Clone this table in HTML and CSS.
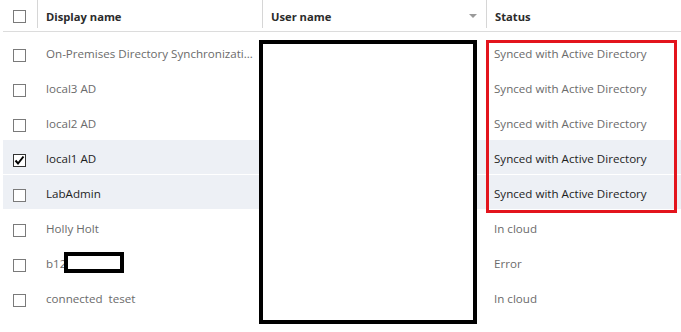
FILE: index.html
```html
<!DOCTYPE html>
<html lang="en">
<head>
    <meta charset="UTF-8">
    <meta name="viewport" content="width=device-width, initial-scale=1.0">
    <title>Users</title>
    <link rel="stylesheet" href="styles.css">
</head>
<body>
    <div class="user-list">
        <div class="list-head">
            <div class="cell cell-check"><span class="box"></span></div>
            <div class="cell head-col">Display name</div>
            <div class="cell head-col sortable">User name <span class="sort-arrow"></span></div>
            <div class="cell head-col">Status</div>
        </div>

        <div class="list-body">
            <div class="row">
                <div class="cell cell-check"><span class="box"></span></div>
                <div class="cell name">On-Premises Directory Synchronizati...</div>
                <div class="cell"></div>
                <div class="cell">Synced with Active Directory</div>
            </div>
            <div class="row">
                <div class="cell cell-check"><span class="box"></span></div>
                <div class="cell name">local3 AD</div>
                <div class="cell"></div>
                <div class="cell">Synced with Active Directory</div>
            </div>
            <div class="row">
                <div class="cell cell-check"><span class="box"></span></div>
                <div class="cell name">local2 AD</div>
                <div class="cell"></div>
                <div class="cell">Synced with Active Directory</div>
            </div>
            <div class="row selected">
                <div class="cell cell-check">
                    <span class="box checked">
                        <svg width="11" height="11" viewBox="0 0 11 11"><polyline points="1.5,5.5 4,8.5 9.5,1.5" fill="none" stroke="#000" stroke-width="2"/></svg>
                    </span>
                </div>
                <div class="cell name">local1 AD</div>
                <div class="cell"></div>
                <div class="cell">Synced with Active Directory</div>
            </div>
            <div class="row selected">
                <div class="cell cell-check"><span class="box"></span></div>
                <div class="cell name">LabAdmin</div>
                <div class="cell"></div>
                <div class="cell">Synced with Active Directory</div>
            </div>
            <div class="row">
                <div class="cell cell-check"><span class="box"></span></div>
                <div class="cell name">Holly Holt</div>
                <div class="cell"></div>
                <div class="cell">In cloud</div>
            </div>
            <div class="row">
                <div class="cell cell-check"><span class="box"></span></div>
                <div class="cell name">b12</div>
                <div class="cell"></div>
                <div class="cell">Error</div>
            </div>
            <div class="row">
                <div class="cell cell-check"><span class="box"></span></div>
                <div class="cell name">connected &nbsp;teset</div>
                <div class="cell"></div>
                <div class="cell">In cloud</div>
            </div>
        </div>

        <!-- markup drawn on top of the list -->
        <div class="mark mark-red"></div>
        <div class="mark mark-hide-user"></div>
        <div class="mark mark-hide-name"></div>
    </div>
</body>
</html>
```

FILE: styles.css
```css
body {
    margin: 0;
    background-color: #fff;
    font-family: "Open Sans", "Noto Sans", sans-serif;
    font-size: 11.6px;
    color: #6b6b6b;
}

.user-list {
    position: relative;
    width: 681px;
    height: 332px;
    overflow: hidden;
}

.list-head,
.row {
    display: grid;
    grid-template-columns: 34px 225px 224px 1fr;
    margin-left: 3px;
}

.list-head {
    height: 31px;
    border-bottom: 1px solid #dcdcdc;
    align-items: start;
}

.cell {
    display: flex;
    align-items: center;
    white-space: nowrap;
}

.cell-check {
    padding-left: 10px;
}

.head-col {
    height: 28px;
    padding-left: 8px;
    padding-top: 4px;
    box-sizing: border-box;
    border-left: 1px solid #d6d6d6;
    font-weight: bold;
    font-size: 11.2px;
    color: #2b2b2b;
}

.list-head .cell-check {
    height: 31px;
    padding-top: 1px;
    box-sizing: border-box;
}

.sortable {
    position: relative;
}

.sort-arrow {
    position: absolute;
    right: 9px;
    top: 14px;
    border-left: 4px solid transparent;
    border-right: 4px solid transparent;
    border-top: 4px solid #9a9a9a;
}

.list-body {
    margin-top: 3px;
}

.row {
    height: 34px;
    margin-bottom: 1px;
}

.row .cell {
    padding-left: 9px;
    padding-top: 3px;
    box-sizing: border-box;
}

.row .cell:nth-child(4) {
    padding-left: 8px;
}

.row .cell-check {
    padding-left: 10px;
    padding-top: 6px;
}

.row .name {
    padding-right: 4px;
}

.row.selected {
    background-color: #edf0f5;
    color: #1e1e1e;
}

.box {
    display: inline-flex;
    align-items: center;
    justify-content: center;
    width: 11px;
    height: 11px;
    border: 1px solid #7a7a7a;
    background: #fff;
}

.box.checked {
    border-color: #333;
}

.mark {
    position: absolute;
    box-sizing: border-box;
}

.mark-red {
    left: 486px;
    top: 40px;
    width: 191px;
    height: 173px;
    border: 3px solid #e3141d;
}

.mark-hide-user {
    left: 259px;
    top: 40px;
    width: 218px;
    height: 284px;
    border: 4px solid #000;
    background: #fff;
}

.mark-hide-name {
    left: 64px;
    top: 252px;
    width: 60px;
    height: 21px;
    border: 4px solid #000;
    background: #fff;
}
```
